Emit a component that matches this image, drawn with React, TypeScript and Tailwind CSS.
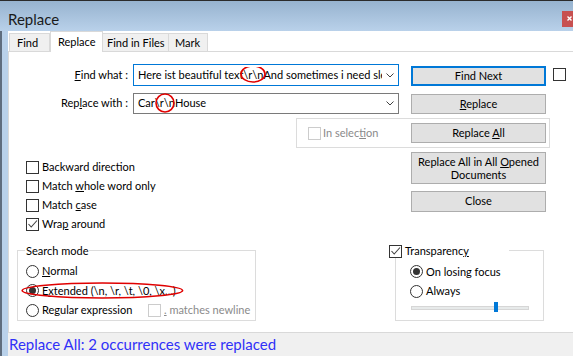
import type { ReactNode } from "react";

function CheckBox({ checked = false, disabled = false }: { checked?: boolean; disabled?: boolean }) {
  return (
    <span
      className={`flex h-[13px] w-[13px] shrink-0 items-center justify-center border bg-white ${
        disabled ? "border-[#cccccc]" : "border-[#333333]"
      }`}
    >
      {checked && (
        <svg width="11" height="11" viewBox="0 0 11 11">
          <path d="M1.5 5 L4.2 8 L10 1.5" fill="none" stroke="#404040" strokeWidth="1.1" />
        </svg>
      )}
    </span>
  );
}

function Radio({ checked = false }: { checked?: boolean }) {
  return (
    <span className="flex h-[13px] w-[13px] shrink-0 items-center justify-center rounded-full border border-[#333333] bg-white">
      {checked && <span className="h-[7px] w-[7px] rounded-full bg-[#333333]" />}
    </span>
  );
}

function Circled({ children, w, h }: { children: ReactNode; w: number; h: number }) {
  return (
    <span className="relative">
      {children}
      <svg
        className="pointer-events-none absolute left-1/2 top-1/2 -translate-x-1/2 -translate-y-1/2 overflow-visible"
        width={w}
        height={h}
      >
        <ellipse cx={w / 2} cy={h / 2} rx={w / 2 - 1} ry={h / 2 - 1} fill="none" stroke="#e00000" strokeWidth="1.6" />
      </svg>
    </span>
  );
}

function Chevron() {
  return (
    <svg width="8" height="5" viewBox="0 0 8 5" className="shrink-0">
      <path d="M0.5 0.5 L4 4 L7.5 0.5" fill="none" stroke="#404040" strokeWidth="1" />
    </svg>
  );
}

export default function App() {
  return (
    <div className="flex h-[356px] w-[573px] flex-col overflow-hidden bg-white font-['Lato',sans-serif] text-[11px] text-black">
      <div className="h-px shrink-0 bg-[#2b2b2b]" />

      {/* title bar */}
      <div className="flex h-[30px] shrink-0 items-start justify-between bg-gradient-to-b from-[#97b3cf] to-[#b9d1ea]">
        <span className="pl-[8px] pt-[9px] text-[15px] leading-[18px] text-[#1a1a1a]">Replace</span>
        <span className="mt-[10px] flex h-[16px] w-[11px] items-start bg-[#c75050] pl-[5px] pt-[5px]">
          <svg width="5" height="5" viewBox="0 0 5 5">
            <path d="M0.5 0.5 L4.5 4.5 M4.5 0.5 L0.5 4.5" stroke="#ffffff" strokeWidth="1.4" />
          </svg>
        </span>
      </div>

      <div className="flex flex-1">
        <div className="w-[8px] shrink-0 border-l-2 border-[#5f6d7e] bg-[#b9d1ea]" />
        <div className="flex flex-1 flex-col">
          {/* tabs */}
          <div className="flex h-[21px] shrink-0 items-end whitespace-nowrap border-b border-[#d9d9d9] pl-px">
            <div className="h-[18px] w-[41px] border border-b-0 border-[#d9d9d9] bg-[#f0f0f0] pl-[7px] leading-[18px]">Find</div>
            <div className="-mb-px h-[21px] w-[53px] border border-b-0 border-[#d9d9d9] bg-white pl-[7px] leading-[20px]">Replace</div>
            <div className="h-[18px] w-[66px] border border-b-0 border-l-0 border-[#d9d9d9] bg-[#f0f0f0] pl-[4px] leading-[18px]">Find in Files</div>
            <div className="h-[18px] w-[39px] border border-b-0 border-l-0 border-[#d9d9d9] bg-[#f0f0f0] pl-[6px] leading-[18px]">Mark</div>
          </div>

          {/* panel */}
          <div className="flex flex-1 flex-col whitespace-nowrap border-l border-[#d9d9d9]">
            {/* find what */}
            <div className="mt-[12px] flex items-start">
              <div className="flex h-[22px] w-[119px] items-center justify-end">
                <span><u>F</u>ind what :</span>
              </div>
              <div className="ml-[5px] flex h-[22px] w-[266px] items-center border border-[#0078d7] pl-[4px] pr-[4px]">
                <span className="flex-1 overflow-hidden">
                  Here ist beautiful text<Circled w={26} h={18}>\r\n</Circled>And sometimes i need sleep
                </span>
                <span className="ml-[4px]"><Chevron /></span>
              </div>
              <div className="ml-[12px] mt-[2px] flex h-[20px] w-[135px] items-center justify-center border-2 border-[#0078d7] bg-[#e1e1e1]">
                Find Next
              </div>
              <div className="ml-[7px] mt-[4px]">
                <CheckBox />
              </div>
            </div>

            {/* replace with */}
            <div className="mt-[7px] flex items-start">
              <div className="flex h-[21px] w-[119px] items-center justify-end">
                <span>Rep<u>l</u>ace with :</span>
              </div>
              <div className="ml-[5px] flex h-[21px] w-[266px] items-center border border-[#7a7a7a] pl-[4px] pr-[4px]">
                <span className="flex-1">
                  Car<Circled w={20} h={20}>\r\n</Circled>House
                </span>
                <span className="ml-[4px]"><Chevron /></span>
              </div>
              <div className="ml-[12px] mt-[1px] flex h-[20px] w-[135px] items-center justify-center border border-[#adadad] bg-[#e1e1e1]">
                <span><u>R</u>eplace</span>
              </div>
            </div>

            {/* in selection */}
            <div className="ml-[287px] mt-[4px] flex h-[30px] w-[254px] items-center border border-[#dcdcdc] pl-[11px]">
              <CheckBox disabled />
              <span className="ml-[2px] w-[88px] text-[#8a8a8a]">In selec<u>t</u>ion</span>
              <div className="flex h-[20px] w-[135px] items-center justify-center border border-[#adadad] bg-[#e1e1e1]">
                <span>Replace <u>A</u>ll</span>
              </div>
            </div>

            {/* options + side buttons */}
            <div className="mt-[4px] flex h-[98px]">
              <div className="flex w-[402px] flex-col pl-[17px] pt-[6px]">
                <div className="flex h-[19px] items-center gap-[3px]">
                  <CheckBox />
                  <span>Backward direction</span>
                </div>
                <div className="flex h-[19px] items-center gap-[3px]">
                  <CheckBox />
                  <span>Match <u>w</u>hole word only</span>
                </div>
                <div className="flex h-[19px] items-center gap-[3px]">
                  <CheckBox />
                  <span>Match <u>c</u>ase</span>
                </div>
                <div className="flex h-[19px] items-center gap-[3px]">
                  <CheckBox checked />
                  <span>Wra<u>p</u> around</span>
                </div>
              </div>
              <div className="flex w-[135px] flex-col">
                <div className="flex h-[32px] items-center justify-center border border-[#adadad] bg-[#e1e1e1] text-center leading-[13px]">
                  <span>
                    Replace All in All <u>O</u>pened
                    <br />
                    Documents
                  </span>
                </div>
                <div className="mt-[7px] flex h-[21px] items-center justify-center border border-[#adadad] bg-[#e1e1e1]">
                  Close
                </div>
              </div>
            </div>

            {/* groups */}
            <div className="flex h-[71px]">
              <div className="relative ml-[8px] flex h-[71px] w-[239px] flex-col border border-[#dcdcdc] pl-[8px] pt-[11px]">
                <span className="absolute -top-[8px] left-[7px] bg-white px-[1px] leading-[15px]">Search mode</span>
                <div className="flex h-[19.5px] items-center gap-[3px]">
                  <Radio />
                  <span><u>N</u>ormal</span>
                </div>
                <div className="flex h-[19.5px] items-center">
                  <div className="relative flex h-full items-center gap-[3px]">
                    <Radio checked />
                    <span className="pr-[6px]">E<u>x</u>tended (\n, \r, \t, \0, \x...)</span>
                    <svg
                      className="pointer-events-none absolute -left-[5px] -right-[2px] top-[1px] h-[17px] w-[calc(100%+7px)]"
                      preserveAspectRatio="none"
                    >
                      <ellipse cx="50%" cy="50%" rx="49.3%" ry="7.5" fill="none" stroke="#e00000" strokeWidth="1.6" />
                    </svg>
                  </div>
                </div>
                <div className="flex h-[19.5px] items-center">
                  <Radio />
                  <span className="ml-[3px] w-[106px]">Re<u>g</u>ular expression</span>
                  <CheckBox disabled />
                  <span className="ml-[3px] text-[#8a8a8a]"><u>.</u> matches newline</span>
                </div>
              </div>

              <div className="relative ml-[139px] flex h-[71px] w-[149px] flex-col border border-[#dcdcdc] pl-[14px] pt-[11px]">
                <span className="absolute -left-[7px] -top-[6px] flex h-[13px] w-[120px] items-center gap-[3px] bg-white">
                  <CheckBox checked />
                  <span>Transparenc<u>y</u></span>
                </span>
                <div className="flex h-[19.5px] items-center gap-[3px]">
                  <Radio checked />
                  <span>On losing focus</span>
                </div>
                <div className="flex h-[19.5px] items-center gap-[3px]">
                  <Radio />
                  <span>Always</span>
                </div>
                <div className="relative ml-px mt-[5px] h-[4px] w-[118px] border border-[#d6d6d6] bg-[#e7eaea]">
                  <span className="absolute -top-[5px] left-[82px] h-[10px] w-[4px] bg-[#0078d7]" />
                </div>
              </div>
            </div>
          </div>

          {/* status bar */}
          <div className="flex h-[24px] shrink-0 items-center border-t border-[#d9d9d9] bg-[#f0f0f0] pl-px text-[15px] text-[#3030f8]">
            Replace All: 2 occurrences were replaced
          </div>
        </div>
      </div>
    </div>
  );
}
